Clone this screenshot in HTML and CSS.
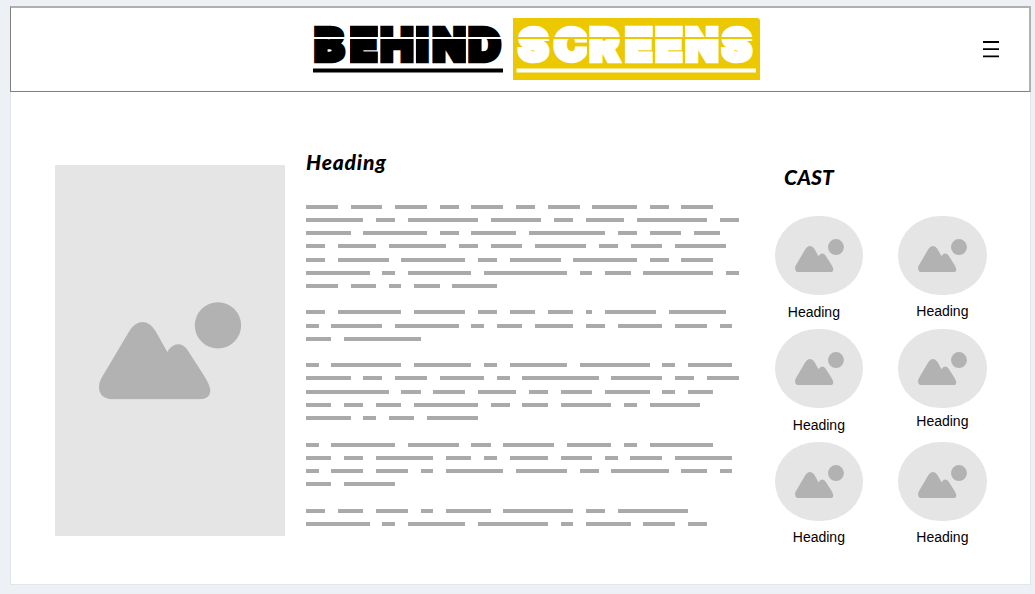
FILE: index.html
```html
<!DOCTYPE html>
<html lang="en">
<head>
<meta charset="utf-8">
<title>Behind Screens</title>
<link rel="stylesheet" href="styles.css">
</head>
<body>
<svg class="defs" aria-hidden="true">
  <symbol id="picture" viewBox="177 65 427 293">
    <path d="M177 320C177 308 182 298 187 289L265 157Q283 125 307 125Q330 125 347 153L382 215Q396 192 414 192Q431 192 443 210L492 286Q511 316 511 332Q509 357 479 357H222Q177 357 177 320Z"/>
    <circle cx="534" cy="135" r="69.5"/>
  </symbol>
</svg>
<div class="page">
  <header class="header">
    <svg class="logo" viewBox="0 0 450 64" role="img" aria-label="Behind Screens">
      <path class="logo-box" d="M203 1H447Q450 1 450 4V63H203Z"/>
      <text class="logo-text" y="43.6" x="4.3 40 70 105.5 122 158.3">BEHIND</text>
      <text class="logo-text light" y="43.6" x="208.6 244 279.3 315 345 374.8 411.8">SCREENS</text>
      <path class="cut" d="M3 21H193M38.8 8V47M69.2 8V47M104.8 8V47M121.3 8V47M157 8V47"/>
      <path class="cut gold" d="M206 21H446M242 8V47M278 8V47M313.5 8V47M344 8V47M374 8V47M409.6 8V47"/>
      <path class="rule" d="M3 53.6H193"/>
      <path class="rule light" d="M206.5 53.6H446"/>
    </svg>
    <svg class="menu" viewBox="0 0 18 20"><path d="M1 3H17M1 10.2H17M1 17.3H17"/></svg>
  </header>
  <main class="content">
    <div class="poster"><svg><use href="#picture"/></svg></div>
    <section class="story">
      <h2 class="title">Heading</h2>
      <div class="copy" id="copy"></div>
    </section>
    <section class="cast">
      <h2 class="title cast-title">CAST</h2>
      <div class="people">
        <div class="person"><div class="avatar"><svg><use href="#picture"/></svg></div><span class="name shifted">Heading</span></div>
        <div class="person"><div class="avatar"><svg><use href="#picture"/></svg></div><span class="name raised">Heading</span></div>
        <div class="person"><div class="avatar"><svg><use href="#picture"/></svg></div><span class="name">Heading</span></div>
        <div class="person"><div class="avatar"><svg><use href="#picture"/></svg></div><span class="name high">Heading</span></div>
        <div class="person"><div class="avatar"><svg><use href="#picture"/></svg></div><span class="name last">Heading</span></div>
        <div class="person"><div class="avatar"><svg><use href="#picture"/></svg></div><span class="name last">Heading</span></div>
      </div>
    </section>
  </main>
</div>
<script src="copy.js"></script>
</body>
</html>
```
FILE: styles.css
```css
* { box-sizing: border-box; }
body { margin: 0; padding: 6px 4px 0 10px; height: 594px; overflow: hidden; background: #edf1f6; font-family: "Liberation Sans", Arial, sans-serif; color: #000; }
.defs { display: block; width: 0; height: 0; }
.page { width: 1021px; height: 579px; background: #fff; border: 1px solid #e2e6ea; border-top: 0; }
.header { width: 1021px; height: 86px; margin-left: -1px; border: 2px solid #b0b0b0; border-bottom: 1px solid #808080; border-left: 1px solid #808080; display: flex; align-items: flex-start; }
.logo { width: 450px; height: 64px; margin: 9px 0 0 299px; overflow: visible; }
.logo-box { fill: #ebc800; }
.logo-text { font: 900 45px Inter, sans-serif; fill: #000; stroke: #000; stroke-width: 4.5px; }
.logo-text.light { fill: #fff; stroke: #fff; }
.cut { stroke: #fff; stroke-width: 2.2px; }
.cut.gold { stroke: #ebc800; }
.rule { stroke: #000; stroke-width: 4px; }
.rule.light { stroke: #fff; }
.menu { width: 18px; height: 20px; margin: 31px 0 0 222px; stroke: #000; stroke-width: 1.8px; }
.content { display: flex; }
.poster { width: 230px; height: 371px; margin: 73px 0 0 44px; background: #e5e5e5; fill: #b2b2b2; padding: 137px 0 0 44px; }
.poster svg { display: block; width: 142.3px; height: 97.6px; }
.story { width: 440px; margin: 57px 0 0 21px; }
.title { margin: 0; font: italic 900 21px/26px Lato, sans-serif; letter-spacing: 0.8px; }
.copy { margin-top: 30px; }
.row { display: flex; height: 13px; gap: 12.72px; }
.row.tall { height: 14px; }
.row.end { height: 26px; }
.row.end-tall { height: 27px; }
.word { height: 4px; background: #aaa; }
.cast { width: 240px; margin: 72px 0 0 28.6px; }
.cast-title { margin-left: 9.4px; letter-spacing: 0.2px; }
.people { display: grid; grid-template-columns: 88.5px 88.5px; column-gap: 35px; grid-auto-rows: 113px; margin-top: 26.3px; }
.person { display: flex; flex-direction: column; align-items: center; }
.avatar { flex: none; width: 88.5px; height: 78.6px; border-radius: 42px / 39.3px; background: #e5e5e5; fill: #b2b2b2; padding: 22.6px 0 0 20px; }
.avatar svg { display: block; width: 49px; height: 33.6px; }
.name { font-size: 14px; line-height: 16px; margin-top: 9px; }
.shifted { margin-right: 10px; }
.raised { margin-top: 8px; }
.high { margin-top: 5px; }
.last { margin-top: 8px; }
```
FILE: copy.js
```js
// Placeholder copy: word lengths per row, then an optional row style.
const rows = [
  ["5 5 5 3 5 3 5 7 3 5"],
  ["9 3 11 8 3 6 11 3"],
  ["7 10 3 7 12 3 5 4"],
  ["3 6 9 3 5 8 3 5 8", "tall"],
  ["3 8 10 3 8 10 3 5"],
  ["10 2 10 13 2 4 11 2"],
  ["5 4 2 4 7", "end"],
  ["3 10 8 3 4 4 1 8 9", "tall"],
  ["2 8 10 2 4 6 3 7 5 2"],
  ["4 12", "end"],
  ["2 11 9 2 9 11 2 7"],
  ["7 3 5 7 2 12 8 3 5", "tall"],
  ["13 3 5 6 3 5 7 2 4"],
  ["4 3 4 10 3 4 8 2 8"],
  ["7 2 4 8", "end-tall"],
  ["2 10 8 3 8 7 2 10"],
  ["4 3 9 4 2 6 5 2 5 9"],
  ["2 5 5 2 9 8 3 9 4 2"],
  ["4 8", "end-tall"],
  ["3 4 5 2 7 11 3 11"],
  ["10 2 9 11 2 7 5 3"]
];
const unit = 6.365;
const copy = document.getElementById("copy");
for (const [lengths, style] of rows) {
  const row = document.createElement("div");
  row.className = style ? "row " + style : "row";
  for (const n of lengths.split(" ")) {
    const word = document.createElement("span");
    word.className = "word";
    word.style.width = n * unit + "px";
    row.append(word);
  }
  copy.append(row);
}
```
